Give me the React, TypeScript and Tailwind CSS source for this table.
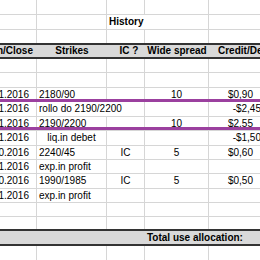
import React from "react";

const W = ["w-[37px]", "w-[70px]", "w-[38px]", "w-[64px]", "w-[55px]"];

type CellProps = {
  i: number;
  children?: React.ReactNode;
  align?: "l" | "c" | "r";
  noR?: boolean;
  bold?: boolean;
  pad?: string;
};

function Cell({ i, children, align = "l", noR = false, bold = false, pad = "" }: CellProps) {
  const al = align === "c" ? "justify-center" : align === "r" ? "justify-end" : "justify-start";
  return (
    <div
      className={`${W[i]} shrink-0 h-full flex items-center whitespace-nowrap ${al} ${
        noR ? "" : "border-r border-[#d6d6d6]"
      } ${bold ? "font-bold" : ""} ${pad}`}
    >
      {children}
    </div>
  );
}

type RowData = {
  h: "h-[14px]" | "h-[15px]";
  a?: string;
  b?: string;
  bAlign?: "l" | "c";
  bNoR?: boolean;
  c?: string;
  d?: string;
  e?: string;
  neg?: boolean;
  dark?: boolean;
};

function DataRow({ r }: { r: RowData }) {
  return (
    <div
      className={`flex ${r.h} ${r.dark ? "border-b-2 border-[#333333]" : "border-b border-[#d6d6d6]"}`}
    >
      <Cell i={0} align="r" pad="pr-[7px]">{r.a}</Cell>
      <Cell i={1} align={r.bAlign ?? "l"} noR={r.bNoR} pad={r.bAlign === "c" ? "" : "pl-[2px]"}>
        {r.b}
      </Cell>
      <Cell i={2} align="c">{r.c}</Cell>
      <Cell i={3} align="c">{r.d}</Cell>
      <Cell i={4} align="r" pad={r.neg ? "pr-[2px]" : "pr-[10px]"}>{r.e}</Cell>
    </div>
  );
}

const rows: RowData[] = [
  { h: "h-[14px]" },
  { h: "h-[15px]" },
  { h: "h-[14px]", a: "1.2016", b: "2180/90", d: "10", e: "$0,90" },
  { h: "h-[15px]", a: "1.2016", b: "rollo do 2190/2200", bNoR: true, e: "-$2,45", neg: true },
  { h: "h-[14px]", a: "1.2016", b: "2190/2200", d: "10", e: "$2,55" },
  { h: "h-[15px]", a: "1.2016", b: "liq.in debet", bAlign: "c", e: "-$1,50", neg: true },
  { h: "h-[14px]", a: "0.2016", b: "2240/45", c: "IC", d: "5", e: "$0,60" },
  { h: "h-[14px]", a: "1.2016", b: "exp.in profit" },
  { h: "h-[15px]", a: "0.2016", b: "1990/1985", c: "IC", d: "5", e: "$0,50" },
  { h: "h-[14px]", a: "1.2016", b: "exp.in profit" },
  { h: "h-[14px]" },
  { h: "h-[14px]", dark: true },
];

export default function App() {
  return (
    <div className="relative w-[260px] h-[260px] overflow-hidden bg-white text-black text-[10px] leading-none font-['Liberation_Sans',Arial,sans-serif]">
      <div className="flex flex-col">
        <DataRow r={{ h: "h-[15px]" }} />
        <div className="flex h-[15px] border-b border-[#d6d6d6]">
          <Cell i={0} />
          <Cell i={1} />
          <Cell i={2} noR bold pad="pl-[2px]">History</Cell>
          <Cell i={3} />
          <Cell i={4} />
        </div>
        <DataRow r={{ h: "h-[15px]", dark: true }} />
        <div className="flex h-[14px] bg-[#d9d9d9] border-b-2 border-[#333333] font-bold">
          <Cell i={0} noR align="r" pad="pr-[4px]">n/Close</Cell>
          <Cell i={1} noR align="c">Strikes</Cell>
          <Cell i={2} noR align="c" pad="pl-[6px]">IC ?</Cell>
          <Cell i={3} noR align="c">Wide spread</Cell>
          <Cell i={4} noR pad="pl-[9px]">Credit/Debit</Cell>
        </div>
        {rows.map((r, k) => (
          <DataRow key={k} r={r} />
        ))}
        <div className="flex h-[15px] bg-[#d9d9d9] border-b-2 border-[#333333] font-bold">
          <Cell i={0} noR />
          <Cell i={1} noR />
          <Cell i={2} noR />
          <Cell i={3} noR pad="pl-[2px]">Total use allocation:</Cell>
          <Cell i={4} noR />
        </div>
        <DataRow r={{ h: "h-[15px]" }} />
      </div>
      <div className="absolute left-0 top-[99px] w-[260px] h-[3px] bg-[#9b409f]" />
      <div className="absolute left-0 top-[127px] w-[260px] h-[3px] bg-[#9b409f]" />
    </div>
  );
}
